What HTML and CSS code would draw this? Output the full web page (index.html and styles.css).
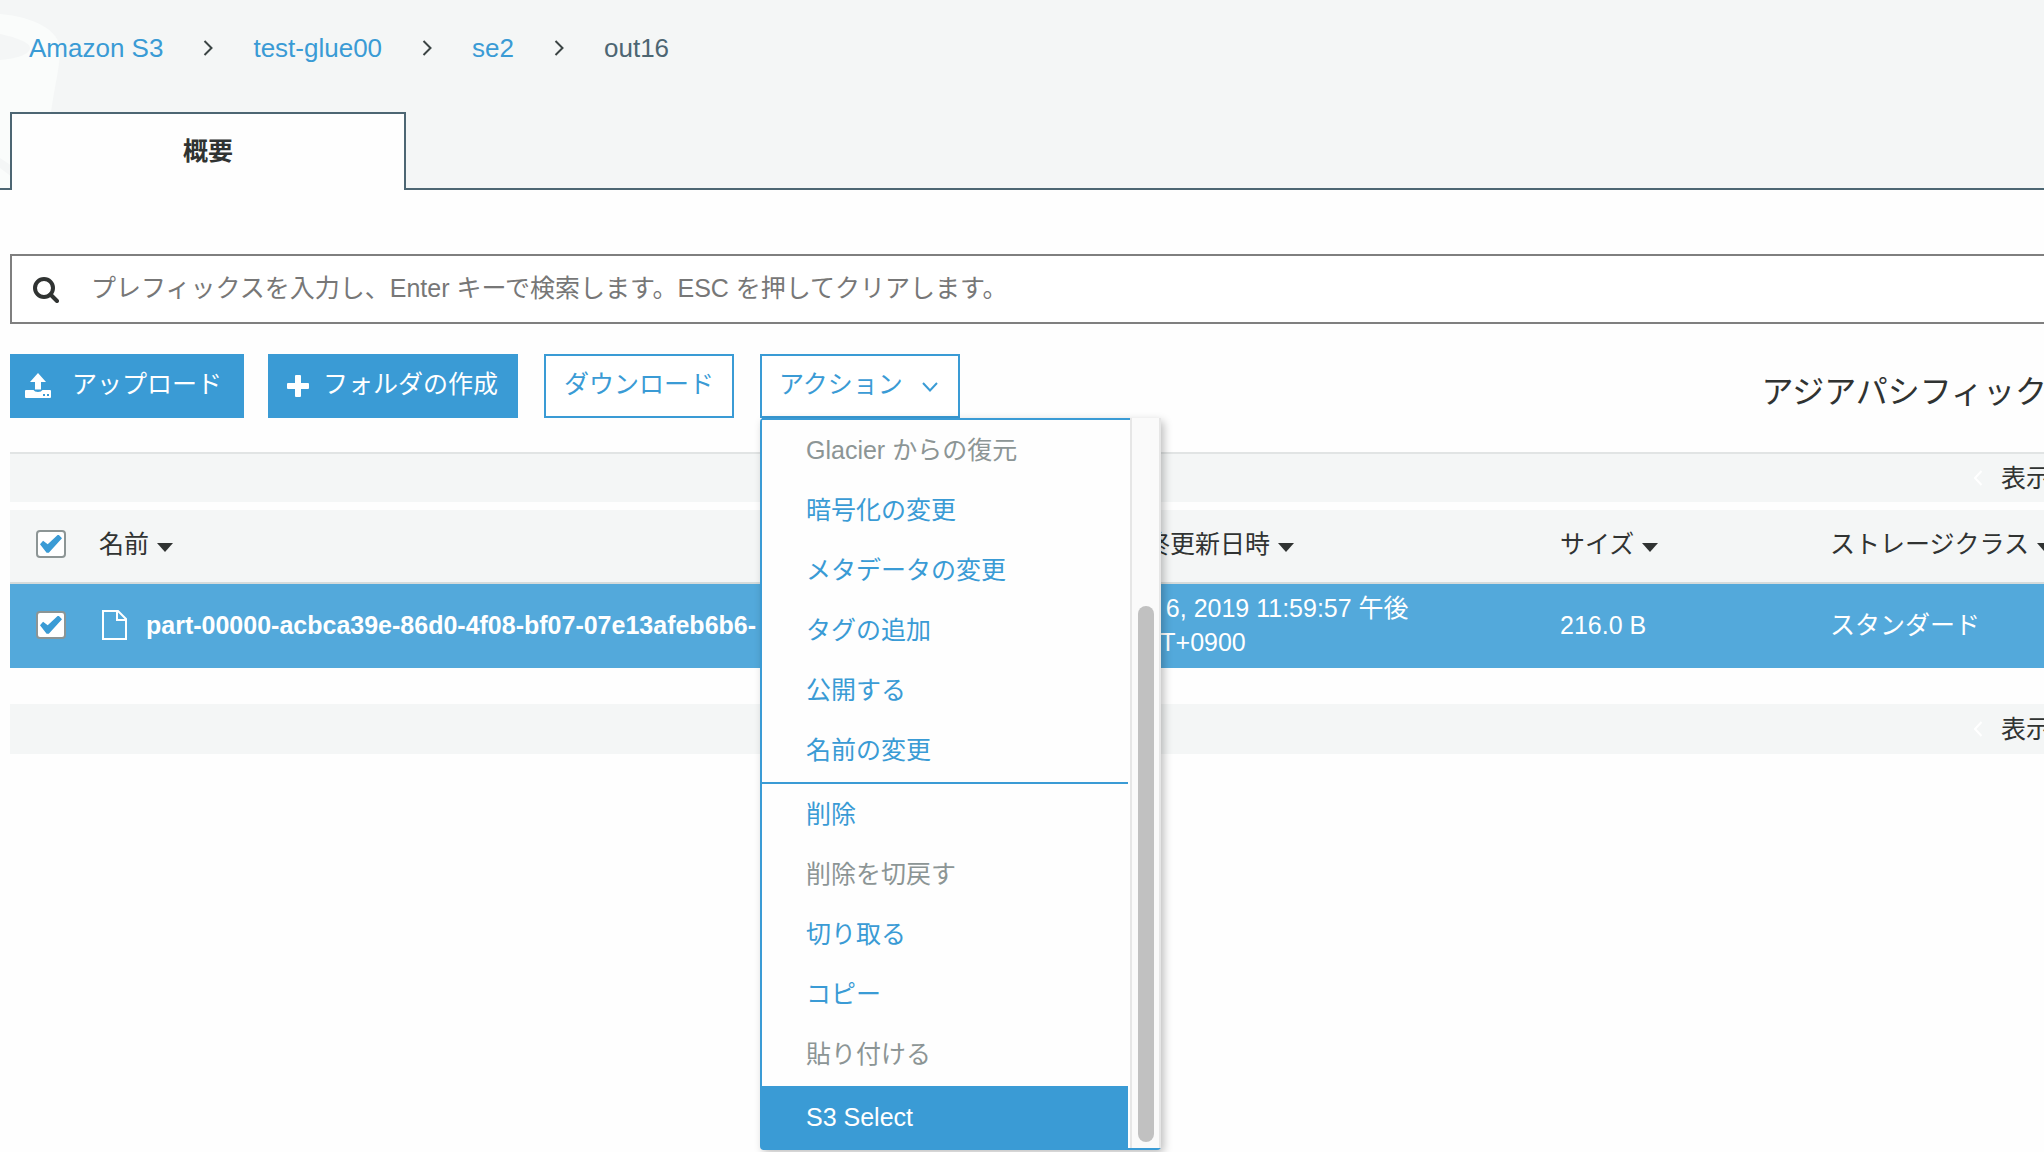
FILE: index.html
```html
<!DOCTYPE html>
<html lang="ja">
<head>
<meta charset="utf-8">
<title>Amazon S3</title>
<link rel="stylesheet" href="styles.css">
</head>
<body>
<header class="page-header">
  <svg class="bucket-art" viewBox="0 0 64 188" aria-hidden="true">
    <path d="M0 14C34 17 60 30 60 50C60 66 55 84 51 112L42 188H0z" fill="#fafcfb"/>
    <path d="M0 34C14 37 30 42 30 48C30 55 14 59 0 60z" fill="#f4f6f6"/>
    <path d="M0 158L12 166V177L0 168z" fill="#f4f6f6"/>
  </svg>
  <nav class="breadcrumb" aria-label="パンくずリスト">
    <a href="#">Amazon S3</a>
    <svg class="crumb-sep" viewBox="0 0 10 16"><path d="M1.5 1L8.500 8L1.5 15"/></svg>
    <a href="#">test-glue00</a>
    <svg class="crumb-sep" viewBox="0 0 10 16"><path d="M1.5 1L8.500 8L1.5 15"/></svg>
    <a href="#">se2</a>
    <svg class="crumb-sep" viewBox="0 0 10 16"><path d="M1.5 1L8.500 8L1.5 15"/></svg>
    <span>out16</span>
  </nav>
  <div class="tabs">
    <button class="tab" type="button">概要</button>
  </div>
</header>

<main class="content">
  <label class="search">
    <svg class="search-icon" viewBox="0 0 26 26" aria-hidden="true"><circle cx="11" cy="11" r="9"/><path d="M17.500 17.500L24 24"/></svg>
    <input type="text" aria-label="検索" placeholder="プレフィックスを入力し、Enter キーで検索します。ESC を押してクリアします。">
  </label>

  <div class="toolbar">
    <button class="btn btn-primary btn-upload" type="button">
      <svg class="icon-upload" viewBox="0 0 26 26" aria-hidden="true"><path d="M13 0L21 9H16V16.500H10V9H5z"/><path d="M1 17H8.500Q9.500 19 13 19T17.500 17H25Q26 17 26 18V24Q26 25 25 25H1Q0 25 0 24V18Q0 17 1 17zM18 21V23H20V21zM22 21V23H24V21z" fill-rule="evenodd"/></svg>
      アップロード
    </button>
    <button class="btn btn-primary btn-folder" type="button">
      <svg class="icon-plus" viewBox="0 0 22 22" aria-hidden="true"><path d="M9 0h4q1 0 1 1v7h7q1 0 1 1v4q0 1-1 1h-7v7q0 1-1 1H9q-1 0-1-1v-7H1q-1 0-1-1V9q0-1 1-1h7V1q0-1 1-1z"/></svg>
      フォルダの作成
    </button>
    <button class="btn btn-outline btn-download" type="button">ダウンロード</button>
    <div class="dropdown">
      <button class="btn btn-outline btn-action" type="button" aria-expanded="true">
        アクション
        <svg class="icon-down" viewBox="0 0 16 10" aria-hidden="true"><path d="M1 1L8 8.500L15 1"/></svg>
      </button>
      <div class="menu">
        <div class="menu-items">
          <div class="menu-group">
            <button class="item" type="button" disabled>Glacier からの復元</button>
            <button class="item" type="button">暗号化の変更</button>
            <button class="item" type="button">メタデータの変更</button>
            <button class="item" type="button">タグの追加</button>
            <button class="item" type="button">公開する</button>
            <button class="item" type="button">名前の変更</button>
          </div>
          <div class="menu-group">
            <button class="item" type="button">削除</button>
            <button class="item" type="button" disabled>削除を切戻す</button>
            <button class="item" type="button">切り取る</button>
            <button class="item" type="button">コピー</button>
            <button class="item" type="button" disabled>貼り付ける</button>
          </div>
          <button class="item item-active" type="button">S3 Select</button>
        </div>
        <div class="menu-track"><div class="menu-thumb"></div></div>
      </div>
    </div>
    <span class="region">アジアパシフィック</span>
  </div>

  <div class="pager pager-top">
    <svg class="pager-prev" viewBox="0 0 10 16" aria-hidden="true"><path d="M8.500 1L2 8L8.500 15"/></svg>
    <span>表示</span>
  </div>

  <table class="objects">
    <colgroup><col class="col-check"><col><col class="col-date"><col class="col-size"><col class="col-class"></colgroup>
    <thead>
      <tr>
        <th class="cell-check"><input class="check" type="checkbox" aria-label="すべて選択" checked></th>
        <th>名前<span class="caret"></span></th>
        <th>最終更新日時<span class="caret"></span></th>
        <th>サイズ<span class="caret"></span></th>
        <th>ストレージクラス<span class="caret"></span></th>
      </tr>
    </thead>
    <tbody>
      <tr>
        <td class="cell-check"><input class="check" type="checkbox" aria-label="オブジェクトを選択" checked></td>
        <td><div class="file">
          <svg class="icon-file" viewBox="0 0 26 30" aria-hidden="true"><path d="M2 1H17L25 9V29H2zM16 1V10H25"/></svg>
          <b>part-00000-acbca39e-86d0-4f08-bf07-07e13afeb6b6-</b>
        </div></td>
        <td>4月 6, 2019 11:59:57 午後<br>GMT+0900</td>
        <td>216.0 B</td>
        <td>スタンダード</td>
      </tr>
    </tbody>
  </table>

  <div class="pager pager-bottom">
    <svg class="pager-prev" viewBox="0 0 10 16" aria-hidden="true"><path d="M8.500 1L2 8L8.500 15"/></svg>
    <span>表示</span>
  </div>
</main>
</body>
</html>
```
FILE: styles.css
```css
:root {
  --blue: #3a9bd5;
  --row: #53a9db;
  --slate: #4d6673;
  --ink: #303332;
  --muted: #8c9595;
  --panel: #f4f6f6;
}

* { box-sizing: border-box; }

html { overflow: hidden; }

body {
  margin: 0;
  overflow: hidden;
  min-height: 100vh;
  background: #fefefe;
  color: var(--ink);
  font: 25px/34px "Liberation Sans", "Noto Sans CJK JP", sans-serif;
}

button, input { font: inherit; color: inherit; }
button { cursor: pointer; }
svg { flex: none; display: block; }

.page-header {
  position: relative;
  background: var(--panel);
}

.bucket-art {
  position: absolute;
  left: 0;
  top: 0;
  width: 64px;
  height: 188px;
}

.breadcrumb {
  position: relative;
  display: flex;
  align-items: center;
  gap: 40px;
  height: 96px;
  padding-left: 29px;
  font-size: 26px;
  color: var(--slate);
}

.breadcrumb a { color: var(--blue); text-decoration: none; }

.crumb-sep {
  width: 10px;
  height: 16px;
  fill: none;
  stroke: #3b4444;
  stroke-width: 2;
}

.tabs {
  position: relative;
  display: flex;
  padding: 16px 0 0 10px;
}

.tabs::before,
.tabs::after {
  content: "";
  align-self: flex-end;
  height: 2px;
  background: var(--slate);
}

.tabs::before { width: 10px; margin-left: -10px; }
.tabs::after { flex: 1; }

.tab {
  width: 396px;
  height: 78px;
  padding: 0 0 2px;
  border: 2px solid var(--slate);
  border-bottom: 0;
  background: #fefefe;
  font-weight: bold;
}

.content { margin: 64px -8px 0 10px; }

.search {
  display: flex;
  align-items: center;
  height: 70px;
  padding: 2px 0 0 21px;
  border: 2px solid #7f7f7f;
  background: #fff;
}

.search-icon {
  width: 26px;
  height: 26px;
  fill: none;
  stroke: var(--ink);
  stroke-width: 4;
  stroke-linecap: round;
}

.search input {
  flex: 1;
  height: 40px;
  padding: 0 0 4px;
  margin-left: 32px;
  border: 0;
  outline: 0;
  background: transparent;
}

.search input::placeholder { color: #777; opacity: 1; }

.toolbar {
  display: flex;
  align-items: flex-start;
  margin-top: 30px;
  height: 98px;
}

.btn {
  display: flex;
  align-items: center;
  height: 64px;
  padding: 0 0 4px;
  border: 2px solid var(--blue);
  white-space: nowrap;
}

.btn-primary { background: var(--blue); color: #fff; fill: #fff; }
.btn-outline { background: #fff; color: var(--blue); }
.btn-upload { width: 234px; padding-left: 13px; gap: 21px; }
.btn-folder { width: 250px; padding-left: 17px; gap: 14px; margin-left: 24px; }
.btn-download { width: 190px; justify-content: center; margin-left: 26px; }
.btn-action { width: 200px; padding-left: 17px; gap: 19px; }

.icon-upload { width: 26px; height: 26px; margin-top: 4px; }
.icon-plus { width: 22px; height: 22px; margin-top: 4px; }
.icon-down {
  width: 16px;
  height: 10px;
  margin-top: 6px;
  fill: none;
  stroke: var(--blue);
  stroke-width: 2;
}

.dropdown { position: relative; margin-left: 26px; }

.menu {
  position: absolute;
  z-index: 5;
  top: 100%;
  left: 0;
  display: flex;
  width: 401px;
  border: 2px solid var(--blue);
  border-right: 0;
  border-top: 0;
  border-radius: 4px;
  background: #fefefe;
  box-shadow: 3px 3px 8px rgba(0, 0, 0, .25);
}

.menu-items {
  flex: 1;
  border-top: 2px solid var(--blue);
}

.menu-group { margin-right: 2px; padding-bottom: 2px; }
.menu-group + .menu-group { border-top: 2px solid var(--blue); }

.item {
  display: block;
  width: 100%;
  height: 60px;
  padding: 0 0 0 44px;
  border: 0;
  background: transparent;
  color: var(--blue);
  text-align: left;
}

.item:disabled { color: var(--muted); }
.item-active { width: calc(100% - 2px); height: 62px; background: var(--blue); color: #fff; }

.menu-track {
  width: 31px;
  padding: 188px 5px 6px 6px;
  border: 2px solid #e6e6e6;
  border-width: 0 2px;
  background: #fafafa;
}

.menu-thumb {
  height: 100%;
  border-radius: 8px;
  background: #c1c1c1;
}

.region {
  margin-left: auto;
  padding: 21px 5px 0 0;
  font-size: 32px;
}

.pager {
  display: flex;
  align-items: center;
  justify-content: flex-end;
  gap: 18px;
  height: 50px;
  padding-right: 1px;
  background: var(--panel);
}

.pager-top { border-top: 2px solid #e1e4e4; }
.pager-bottom { margin-top: 36px; }

.pager-prev {
  width: 10px;
  height: 16px;
  fill: none;
  stroke: #fff;
  stroke-width: 2;
}

.objects {
  width: 100%;
  margin-top: 8px;
  border-collapse: separate;
  border-spacing: 0;
  table-layout: fixed;
}

.col-check { width: 89px; }
.col-date { width: 440px; }
.col-size { width: 270px; }
.col-class { width: 222px; }

.objects th,
.objects td {
  padding: 0;
  text-align: left;
  white-space: nowrap;
}

.objects th {
  height: 74px;
  padding-bottom: 4px;
  border-bottom: 2px solid #d5dbdb;
  background: var(--panel);
  font-weight: normal;
}

.objects td {
  height: 84px;
  padding-bottom: 2px;
  background: var(--row);
  color: #fff;
}

.objects .cell-check { padding-left: 26px; }

.caret {
  display: inline-block;
  margin-left: 8px;
  border: 8px solid transparent;
  border-top: 9px solid var(--ink);
  border-bottom: 0;
  vertical-align: 1px;
}

.check {
  display: block;
  appearance: none;
  width: 30px;
  height: 28px;
  margin: 0;
  border: 2px solid #8c9595;
  border-radius: 4px;
  background: #fff;
}

.check:checked::before {
  content: "";
  display: block;
  width: 22px;
  height: 18px;
  margin: 3px 2px;
  background: var(--blue);
  clip-path: polygon(0 52%, 14% 32%, 35% 52%, 80% 0, 86% 0, 100% 18%, 40% 98%, 30% 98%);
}

.file {
  display: flex;
  align-items: center;
  gap: 19px;
  padding-left: 2px;
}

.icon-file {
  width: 26px;
  height: 30px;
  fill: none;
  stroke: #fff;
  stroke-width: 2;
}
```
